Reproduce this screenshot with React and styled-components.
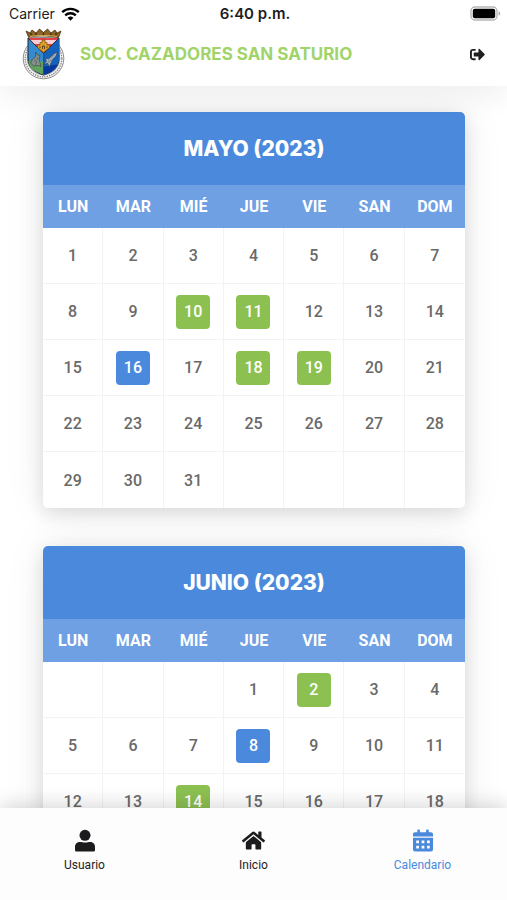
import React from 'react'
import styled, { createGlobalStyle } from 'styled-components'
import { FaHome, FaSignOutAlt } from 'react-icons/fa'

const GlobalStyle = createGlobalStyle`
	* {
		box-sizing: border-box;
	}

	body {
		margin: 0;
		background-color: #fff;
		color: #1c1c1e;
		font-family: Roboto, 'Liberation Sans', sans-serif;
	}
`

const Screen = styled.div`
	display: flex;
	flex-direction: column;
	height: 100vh;
	overflow: hidden;
`

const Header = styled.header`
	position: relative;
	z-index: 2;
	background-color: #fff;
	box-shadow: 0 12px 28px rgba(0, 0, 0, 0.06);
`

const StatusBar = styled.div`
	display: grid;
	grid-template-columns: 1fr auto 1fr;
	align-items: center;
	height: 27px;
	padding: 0 6px 0 9px;
	font-family: Inter, 'Liberation Sans', sans-serif;
	font-size: 14px;
`

const Carrier = styled.span`
	display: flex;
	align-items: center;
	gap: 6px;
`

const Clock = styled.time`
	font-size: 15px;
	font-weight: 600;
`

const Battery = styled.svg`
	justify-self: end;
`

const Brand = styled.div`
	display: flex;
	align-items: center;
	gap: 15px;
	height: 59px;
	padding: 0 22px 5px;
`

const BrandName = styled.h1`
	flex: 1;
	margin: 0;
	color: #a0d468;
	font-family: Inter, 'Liberation Sans', sans-serif;
	font-size: 17px;
	font-weight: 700;
	line-height: 24px;
	white-space: nowrap;
`

const LogoutButton = styled.button`
	display: flex;
	padding: 0;
	border: 0;
	background: none;
	color: #1f1f1f;
	font-size: 15px;
	cursor: pointer;
`

const Main = styled.main`
	flex: 1;
	min-height: 0;
	display: flex;
	flex-direction: column;
	gap: 38px;
	padding: 26px 42px 38px 43px;
	overflow-y: auto;
	scrollbar-width: none;
`

const Card = styled.section`
	flex: none;
	border-radius: 5px;
	background-color: #fff;
	box-shadow: 0 5px 18px rgba(0, 0, 0, 0.12), 0 0 44px rgba(0, 0, 0, 0.07);
`

const MonthName = styled.h2`
	margin: 0;
	border-radius: 5px 5px 0 0;
	background-color: #4a89dc;
	color: #fff;
	font-family: Inter, 'Liberation Sans', sans-serif;
	font-size: 21px;
	font-weight: 800;
	line-height: 73px;
	text-align: center;
`

const Days = styled.table`
	width: 100%;
	border-collapse: separate;
	border-spacing: 0;
	table-layout: fixed;
	text-align: center;

	th {
		height: 43px;
		padding: 0;
		background-color: #6ea0e3;
		color: #fff;
		font-size: 16px;
		font-weight: 700;
	}

	td {
		height: 56px;
		padding: 0;
		color: #696969;
		font-size: 16px;
		font-weight: 500;
	}

	td:not(:last-child) {
		border-right: 1px solid #f3f3f3;
	}

	tr:not(:last-child) td {
		border-bottom: 1px solid #f3f3f3;
	}
`

const DayButton = styled.button`
	width: 34px;
	height: 34px;
	padding: 0;
	border: 0;
	border-radius: 4px;
	background-color: ${({ $color }) => $color};
	color: #fff;
	font: inherit;
	vertical-align: middle;
	cursor: pointer;
`

const Nav = styled.nav`
	position: relative;
	z-index: 2;
	display: grid;
	grid-template-columns: repeat(3, 1fr);
	height: 92px;
	padding-top: 21px;
	background-color: #fdfdfd;
	box-shadow: 0 -4px 18px rgba(0, 0, 0, 0.15);
`

const NavLink = styled.a`
	display: flex;
	flex-direction: column;
	align-items: center;
	gap: 5px;
	color: ${({ $active }) => ($active ? '#4a89dc' : '#1c1c1e')};
	font-size: 12px;
	line-height: 16px;
	text-decoration: none;

	svg {
		height: 23px;
		font-size: 23px;
	}
`

const GREEN = '#8cc152'
const BLUE = '#4a89dc'

const UserIcon = () => (
	<svg width='20' height='23' viewBox='0 0 20 23' fill='currentColor' aria-hidden='true'>
		<circle cx='10' cy='6.300' r='5.500' />
		<path d='M0 21v-3.200C0 14.900 2.200 13 5 13c1.700 0 2.500.6 5 .6s3.300-.6 5-.6c2.800 0 5 1.900 5 4.800V21c0 1-.7 1.600-1.600 1.600H1.600C.7 22.600 0 22 0 21z' />
	</svg>
)

const CalendarIcon = () => (
	<svg width='20' height='23' viewBox='0 0 20 23' fill='currentColor' aria-hidden='true'>
		<path d='M4.300 3.300V1.200c0-.5.3-.8.800-.8h1c.5 0 .8.3.8.8v2.100h6.200V1.200c0-.5.3-.8.8-.8h1c.5 0 .8.3.8.8v2.100H18c1.100 0 2 .8 2 1.900v2.200H0V5.200c0-1.100.9-1.900 2-1.900z' />
		<path
			fillRule='evenodd'
			d='M0 8.700h20v11.900c0 1.100-.9 2-2 2H2c-1.100 0-2-.9-2-2zM3.200 11.400v2.800h2.800v-2.800zM8.600 11.400v2.800h2.800v-2.800zM14 11.400v2.800h2.800v-2.800zM3.200 16.800v2.800h2.800v-2.800zM8.600 16.800v2.800h2.800v-2.800zM14 16.800v2.800h2.800v-2.800z'
		/>
	</svg>
)

const WifiIcon = () => (
	<svg width='19' height='14' viewBox='0 0 19 14' fill='none' stroke='#000' strokeWidth='2.3' aria-hidden='true'>
		<path d='M1.2 5.2a12 12 0 0 1 16.6 0' />
		<path d='M4.2 8.4a7.6 7.6 0 0 1 10.6 0' />
		<path d='M6.6 10.7a4.3 4.3 0 0 1 5.8 0L9.5 13.7z' fill='#000' stroke='none' />
	</svg>
)

const BatteryIcon = () => (
	<Battery width='31' height='15' viewBox='0 0 31 15' role='img' aria-label='Batería'>
		<rect x='1' y='1' width='26' height='13' rx='4' fill='#fff' stroke='#b5b5b5' strokeWidth='1.4' />
		<rect x='2.8' y='2.7' width='22.4' height='9.6' rx='2' fill='#000' />
		<path d='M28.6 5.3c2.2.8 2.2 3.6 0 4.4z' fill='#a9a9a9' />
	</Battery>
)

const Crest = () => (
	<svg width='43' height='52' viewBox='0 0 43 52' role='img' aria-label='Escudo'>
		<circle cx='21.5' cy='30.5' r='20.3' fill='#f4f4f4' stroke='#8d8d8d' strokeWidth='1' />
		<circle cx='21.5' cy='30.5' r='18.3' fill='none' stroke='#858585' strokeWidth='1.3' strokeDasharray='1.4 1' />
		<circle cx='21.5' cy='30.5' r='16.3' fill='#fff' stroke='#777' strokeWidth='.7' />
		<path d='M6 10h31v20c0 9-6 14-15.500 17C12 44 6 39 6 30z' fill='#348bd0' stroke='#20252b' strokeWidth='1' />
		<path d='M21.500 25.500 37 10v20c0 9-6 14-15.500 17z' fill='#1462bb' />
		<path d='M6.500 33c4-3 10-2 15 1v12.500C13 44 7 40 6.500 33z' fill='#61a35b' />
		<path d='M21.500 38c5 1 9-2 14-1-2 5-7 8-14 9.500z' fill='#0638a0' />
		<path d='M6 10h31L21.500 25.500z' fill='#e2414b' />
		<path d='M8.500 12h26l-4 4h-18z' fill='#fff' opacity='.75' />
		<path d='M6 10 21.500 25.500 37 10' fill='none' stroke='#222' strokeWidth='.8' />
		<path d='M15.500 19.500V17H18v-2.500h2V12h3v2.500h2V17h2.500v2.500l-6 5z' fill='#d9a02d' stroke='#7c4c10' strokeWidth='.7' />
		<path d='M20.500 21v-3h2v3M18 18.500v1.500M25 18.500v1.500' fill='none' stroke='#5d350b' strokeWidth='.9' />
		<path d='m13.500 24 2 3 2.500.5-.8 4 1.800 7-2.500-1-5 .5-3-3 2-4 3-2z' fill='#858f8e' stroke='#3c4a48' strokeWidth='.7' />
		<path d='m12 32 3 2-2 3M16 29l-1 3' fill='none' stroke='#56625e' strokeWidth='.8' />
		<path d='M22.500 30c4 2 6-1 9-4l4-2-2 5c-3 1-3 4-5 7l-1 3-2-4-4 2 3-4z' fill='#a5b3bf' stroke='#32465d' strokeWidth='.7' />
		<path d='m26 32 6-5M26 34l4-2' stroke='#596f84' strokeWidth='.8' />
		<path d='M21.500 26v20' stroke='#244e55' strokeWidth='.8' />
		<path d='M6.500 9 4 3l4 2 2-3 4 3 3.500-4 4 3.500L25.500 1 29 5l4-3 2 3 4-2-2.500 6.500c-9-2-21-2-30-.5z' fill='#8a6426' stroke='#49300f' strokeWidth='.8' />
		<path d='M8 8.500c8-1.500 18-1.500 27 0' fill='none' stroke='#d9a84f' strokeWidth='1' />
		<path d='M9 5v2M14 5v2M21.500 4.500V7M29 5v2M34 5v2' stroke='#4d2912' strokeWidth='1.300' />
	</svg>
)

const weekdays = ['LUN', 'MAR', 'MIÉ', 'JUE', 'VIE', 'SAN', 'DOM']

// offset: empty cells before day 1 in a week that starts on Monday
const months = [
	{
		name: 'MAYO (2023)',
		offset: 0,
		length: 31,
		marked: { 10: GREEN, 11: GREEN, 16: BLUE, 18: GREEN, 19: GREEN }
	},
	{
		name: 'JUNIO (2023)',
		offset: 3,
		length: 30,
		marked: { 2: GREEN, 8: BLUE, 14: GREEN }
	}
]

const links = [
	{ label: 'Usuario', href: '#usuario', Icon: UserIcon },
	{ label: 'Inicio', href: '#inicio', Icon: FaHome },
	{ label: 'Calendario', href: '#calendario', Icon: CalendarIcon, active: true }
]

const getWeeks = ({ offset, length }) => {
	const count = Math.ceil((offset + length) / 7)

	return Array.from({ length: count }, (_, week) =>
		weekdays.map((_, i) => {
			const day = week * 7 + i + 1 - offset
			return day > 0 && day <= length ? day : null
		})
	)
}

const Month = ({ month }) => (
	<Card>
		<MonthName>{month.name}</MonthName>
		<Days aria-label={month.name}>
			<thead>
				<tr>
					{weekdays.map(day => (
						<th key={day} scope='col'>{day}</th>
					))}
				</tr>
			</thead>
			<tbody>
				{getWeeks(month).map((week, index) => (
					<tr key={index}>
						{week.map((day, i) => (
							<td key={i}>
								{month.marked[day] ? (
									<DayButton type='button' $color={month.marked[day]}>{day}</DayButton>
								) : (
									day
								)}
							</td>
						))}
					</tr>
				))}
			</tbody>
		</Days>
	</Card>
)

export default () => {
	return (
		<Screen>
			<GlobalStyle />
			<Header>
				<StatusBar>
					<Carrier>
						Carrier
						<WifiIcon />
					</Carrier>
					<Clock>6:40 p.m.</Clock>
					<BatteryIcon />
				</StatusBar>
				<Brand>
					<Crest />
					<BrandName>SOC. CAZADORES SAN SATURIO</BrandName>
					<LogoutButton type='button' aria-label='Cerrar sesión'>
						<FaSignOutAlt />
					</LogoutButton>
				</Brand>
			</Header>
			<Main>
				{months.map(month => (
					<Month key={month.name} month={month} />
				))}
			</Main>
			<Nav>
				{links.map(({ label, href, Icon, active }) => (
					<NavLink key={label} href={href} $active={active} aria-current={active ? 'page' : undefined}>
						<Icon />
						{label}
					</NavLink>
				))}
			</Nav>
		</Screen>
	)
}
